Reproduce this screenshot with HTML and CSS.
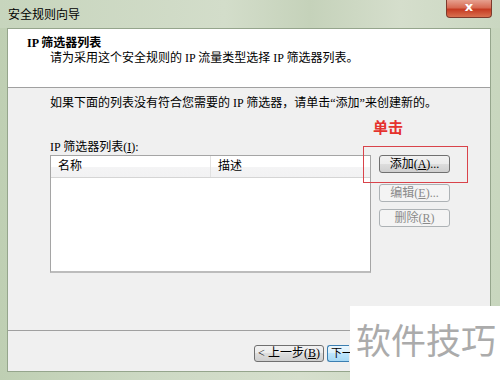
FILE: index.html
```html
<!DOCTYPE html>
<html lang="zh-CN">
<head>
    <meta charset="UTF-8">
    <meta name="viewport" content="width=device-width, initial-scale=1.0">
    <title>安全规则向导</title>
    <link rel="stylesheet" href="styles.css">
</head>
<body>
    <div class="window">
        <div class="titlebar">
            <span class="title">安全规则向导</span>
            <span class="close">x</span>
        </div>
        <div class="client">
            <div class="header">
                <div class="header-title">IP 筛选器列表</div>
                <div class="header-desc">请为采用这个安全规则的 IP 流量类型选择 IP 筛选器列表。</div>
            </div>
            <div class="content">
                <p class="info">如果下面的列表没有符合您需要的 IP 筛选器，请单击“添加”来创建新的。</p>
                <div class="list-row">
                    <div class="list-col">
                        <div class="list-label">IP 筛选器列表(<u>I</u>):</div>
                        <div class="listbox">
                            <div class="list-head">
                                <span class="col-name">名称</span>
                                <span class="col-desc">描述</span>
                            </div>
                        </div>
                    </div>
                    <div class="side-buttons">
                        <span class="callout-text">单击</span>
                        <span class="callout-box"></span>
                        <button class="btn btn-add">添加(<u>A</u>)...</button>
                        <button class="btn btn-edit" disabled>编辑(<u>E</u>)...</button>
                        <button class="btn" disabled>删除(<u>R</u>)</button>
                    </div>
                </div>
            </div>
            <div class="footer">
                <button class="btn btn-back">&lt; 上一步(<u>B</u>)</button>
                <button class="btn btn-default">下一</button>
            </div>
        </div>
        <div class="watermark">软件技巧</div>
    </div>
</body>
</html>
```

FILE: styles.css
```css
:root {
    --frame-color: #c9d7bf;
    --face-color: #f0f0f0;
    --text-color: #000000;
}

body, html {
    margin: 0;
    font-family: "Liberation Serif", "Noto Sans CJK SC", serif;
    font-size: 12px;
    color: var(--text-color);
}

.window {
    position: relative;
    width: 500px;
    height: 380px;
    display: flex;
    flex-direction: column;
    background: linear-gradient(to right, #bfcfb3 0%, #cdd9c4 30%, #d6dfcd 60%, #c8d6be 100%);
    overflow: hidden;
}

.titlebar {
    height: 28px;
    display: flex;
    align-items: center;
    background: linear-gradient(to right, #c7d5bd 0%, #d3ddca 45%, #c5d2ba 62%, #d5decc 80%, #cad7c1 100%);
}

.title {
    padding-left: 8px;
    padding-bottom: 1px;
    font-family: "Noto Sans CJK SC", sans-serif;
    font-size: 12px;
}

.close {
    margin-left: auto;
    margin-right: 8px;
    align-self: flex-start;
    width: 46px;
    height: 18px;
    box-sizing: border-box;
    border: 1px solid #7d3a2c;
    border-top: none;
    border-radius: 0 0 4px 4px;
    background: linear-gradient(#e6a08f 0%, #d76a53 45%, #c53b22 55%, #d9704f 100%);
    color: #ffffff;
    font-family: "DejaVu Sans", sans-serif;
    font-weight: bold;
    font-size: 13px;
    line-height: 14px;
    text-align: center;
}

.client {
    margin: 0 9px 0 7px;
    height: 344px;
    box-sizing: border-box;
    border: 1px solid #95a58c;
    display: flex;
    flex-direction: column;
}

.header {
    height: 59px;
    box-sizing: border-box;
    padding-top: 7px;
    background-color: #ffffff;
    border-bottom: 1px solid #a0a0a0;
}

.header-title {
    padding-left: 19px;
    line-height: 15px;
    font-weight: bold;
}

.header-desc {
    padding-left: 42px;
    line-height: 15px;
}

.content {
    height: 243px;
    box-sizing: border-box;
    padding: 8px 0 0 42px;
    background-color: var(--face-color);
    border-bottom: 1px solid #a0a0a0;
}

.info {
    margin: 0 0 28px 0;
    line-height: 15px;
}

.list-row {
    display: flex;
}

.list-label {
    line-height: 16px;
}

.listbox {
    width: 321px;
    height: 118px;
    box-sizing: border-box;
    border: 1px solid #a5a5a5;
    border-bottom: 2px solid #bcbcbc;
    background-color: #ffffff;
}

.list-head {
    display: flex;
    height: 21px;
    line-height: 20px;
    border-bottom: 1px solid #d5d5d5;
    background: linear-gradient(#ffffff 0%, #ffffff 50%, #f4f4f5 50%, #f2f2f3 100%);
}

.col-name {
    width: 152px;
    padding-left: 7px;
    border-right: 1px solid #e1e1e1;
}

.col-desc {
    padding-left: 7px;
}

.side-buttons {
    position: relative;
    display: flex;
    flex-direction: column;
    margin-left: 8px;
    padding-top: 16px;
}

.btn {
    width: 71px;
    height: 18px;
    padding: 0;
    box-sizing: border-box;
    border: 1px solid #707070;
    border-radius: 3px;
    background: linear-gradient(#f2f2f2 0%, #ebebeb 50%, #dddddd 50%, #cfcfcf 100%);
    font-family: "Liberation Serif", "Noto Sans CJK SC", serif;
    font-size: 12px;
    line-height: 15px;
    color: var(--text-color);
}

.btn:disabled {
    border-color: #adb2b5;
    background: #f4f4f4;
    color: #8a8a8a;
}

.btn-add {
    margin-bottom: 11px;
}

.btn-edit {
    margin-bottom: 7px;
}

.callout-text {
    position: absolute;
    left: -6px;
    top: -20px;
    font-family: "Noto Sans CJK SC", sans-serif;
    font-size: 15px;
    line-height: 16px;
    font-weight: bold;
    color: #e5322d;
}

.callout-box {
    position: absolute;
    left: -16px;
    top: 7px;
    width: 103px;
    height: 35px;
    border: 1px solid #d9434a;
}

.footer {
    flex: 1;
    display: flex;
    align-items: flex-start;
    padding: 14px 0 0 246px;
    background-color: var(--face-color);
}

.btn-back {
    width: 70px;
    height: 17px;
    margin-right: 3px;
}

.btn-default {
    width: 22px;
    height: 17px;
    padding-left: 3px;
    text-align: left;
    white-space: nowrap;
    font-size: 11px;
    border-color: #3c7fb1;
    border-right: none;
    border-radius: 3px 0 0 3px;
    background: linear-gradient(#eaf6fd 0%, #d9f0fc 50%, #bee6fd 50%, #a7d9f5 100%);
}

.watermark {
    position: absolute;
    left: 350px;
    top: 306px;
    width: 150px;
    height: 74px;
    box-sizing: border-box;
    padding: 12px 0 0 6px;
    background-color: #ffffff;
    font-family: "Noto Sans CJK SC", sans-serif;
    font-size: 35px;
    line-height: 42px;
    color: #ababab;
    white-space: nowrap;
}
```
